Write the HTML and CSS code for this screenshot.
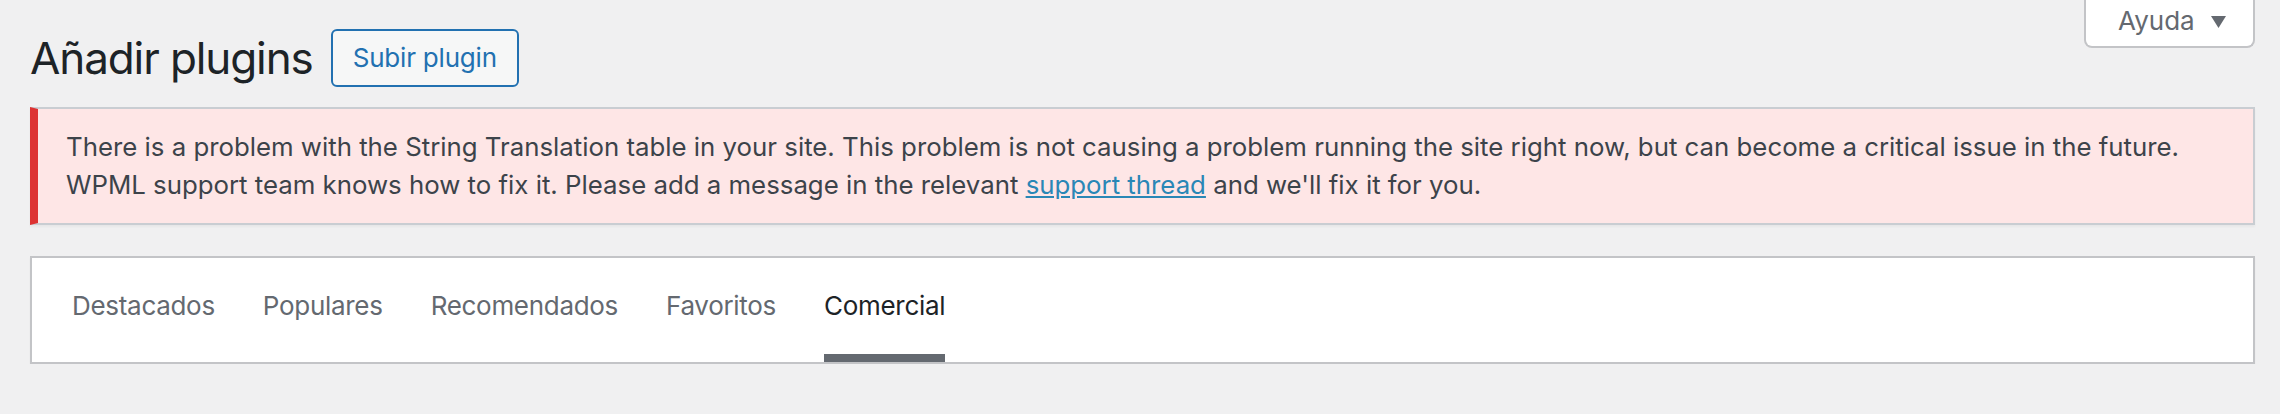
FILE: index.html
```html
<!DOCTYPE html>
<html lang="es">
<head>
<meta charset="utf-8">
<title>Añadir plugins</title>
<link rel="stylesheet" href="styles.css">
</head>
<body>
<div class="screen-meta-links">
  <button class="help-tab" type="button">Ayuda<svg class="caret" width="15" height="12" viewBox="0 0 15 12" aria-hidden="true"><polygon points="0,0 15,0 7.5,12" fill="#646970"/></svg></button>
</div>
<div class="wrap">
  <div class="title-row">
    <h1 class="page-title">Añadir plugins</h1>
    <a class="title-action" href="#">Subir plugin</a>
  </div>
  <div class="notice notice-error">
    <p>There is a problem with the String Translation table in your site. This problem is not causing a problem running the site right now, but can become a critical issue in the future.<br>WPML support team knows how to fix it. Please add a message in the relevant <a href="#">support thread</a> and we'll fix it for you.</p>
  </div>
  <div class="wp-filter">
    <ul class="filter-links">
      <li><a href="#">Destacados</a></li>
      <li><a href="#">Populares</a></li>
      <li><a href="#">Recomendados</a></li>
      <li><a href="#">Favoritos</a></li>
      <li><a href="#" class="current">Comercial</a></li>
    </ul>
  </div>
</div>
</body>
</html>
```

FILE: styles.css
```css
html, body {
  margin: 0;
  padding: 0;
}
body {
  background: #f0f0f1;
  font-family: Inter, "Liberation Sans", Arial, sans-serif;
  color: #3c434a;
  font-size: 26px;
}
.screen-meta-links {
  float: right;
  margin-right: 25px;
}
.help-tab {
  display: flex;
  align-items: center;
  gap: 16px;
  height: 48px;
  box-sizing: border-box;
  padding: 0 31px 4px 32px;
  font-family: inherit;
  font-size: 26px;
  line-height: 32px;
  color: #646970;
  background: #fff;
  border: 2px solid #c3c4c7;
  border-top: 0;
  border-radius: 0 0 8px 8px;
  width: 171px;
}
.caret {
  display: block;
  flex-shrink: 0;
  width: 15px;
  height: 12px;
  margin-top: 1px;
}
.wrap {
  margin: 0 25px 0 30px;
}
.title-row {
  display: flex;
  align-items: flex-start;
  padding-top: 29px;
}
.page-title {
  margin: 0 18px 0 0;
  font-size: 44px;
  letter-spacing: -1.1px;
  font-weight: 400;
  line-height: 58px;
  color: #1d2327;
}
.title-action {
  display: block;
  height: 58px;
  box-sizing: border-box;
  padding: 0 20px;
  border: 2px solid #2271b1;
  border-radius: 6px;
  background: #f6f7f7;
  color: #2271b1;
  font-size: 26px;
  letter-spacing: -0.2px;
  line-height: 54px;
  text-decoration: none;
}
.notice {
  margin-top: 20px;
  background: #fee6e6;
  border: 2px solid #c9cdd2;
  border-left: 8px solid #dd3232;
  box-shadow: 0 2px 2px rgba(0, 0, 0, 0.04);
  padding: 2px 24px;
}
.notice p {
  margin: 13px 0;
  padding: 4px 0 4px 4px;
  font-size: 25.8px;
  line-height: 38px;
  color: #3c434a;
}
.notice a {
  color: #2a87b6;
  text-decoration: underline;
}
.wp-filter {
  margin-top: 31px;
  background: #fff;
  border: 2px solid #c3c4c7;
  box-shadow: 0 2px 2px rgba(0, 0, 0, 0.04);
  padding: 0 16px;
}
.filter-links {
  display: flex;
  list-style: none;
  margin: 0;
  padding: 0;
}
.filter-links a {
  display: block;
  margin: 0 24px;
  padding: 30px 0 30px;
  line-height: 36px;
  letter-spacing: -0.3px;
  color: #646970;
  text-decoration: none;
  border-bottom: 8px solid #fff;
}
.filter-links a.current {
  color: #1d2327;
  border-bottom-color: #646970;
}
```
